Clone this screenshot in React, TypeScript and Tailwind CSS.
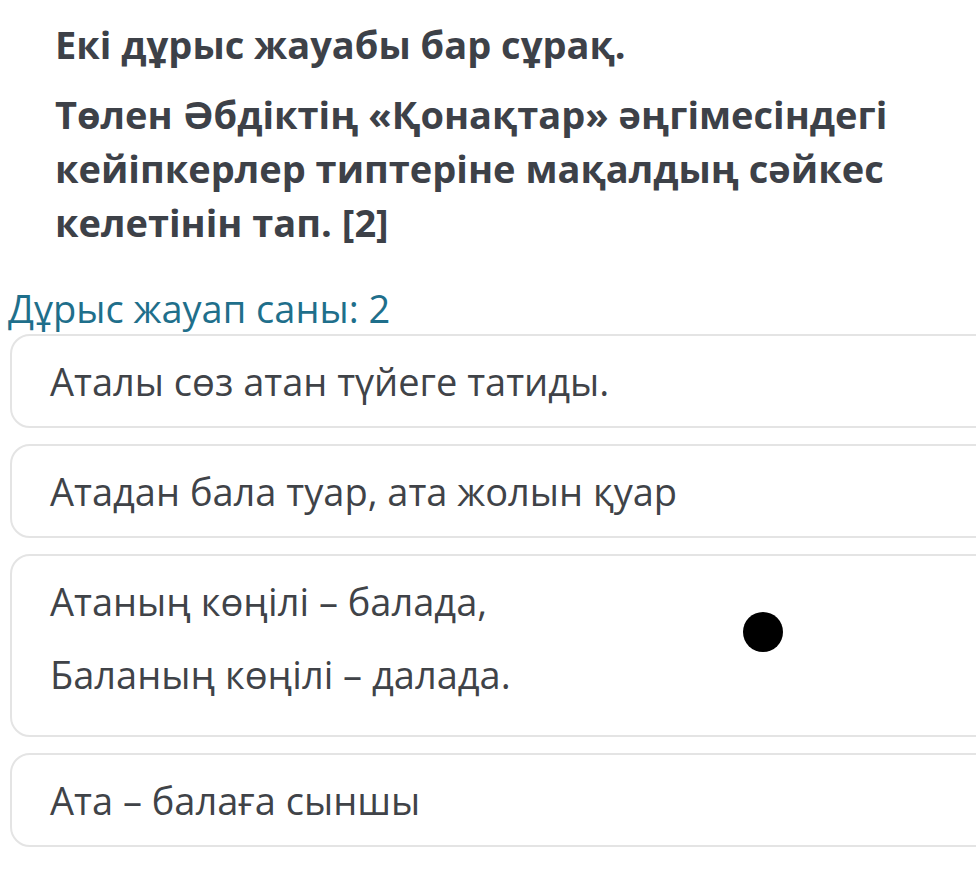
import React from 'react';

const options: string[][] = [
  ['Аталы сөз атан түйеге татиды.'],
  ['Атадан бала туар, ата жолын қуар'],
  ['Атаның көңілі – балада,', 'Баланың көңілі – далада.'],
  ['Ата – балаға сыншы'],
];

export default function App() {
  return (
    <div className="relative w-[976px] h-[894px] overflow-hidden bg-white" style={{ fontFamily: '"Open Sans", sans-serif' }}>
      <div className="pl-[55px] pt-[17px] pr-6 text-[#3d4148] font-bold text-[38px] leading-[54px]">
        <p>Екі дұрыс жауабы бар сұрақ.</p>
        <p className="mt-4">
          Төлен Әбдіктің «Қонақтар» әңгімесіндегі кейіпкерлер типтеріне мақалдың сәйкес келетінін тап. [2]
        </p>
      </div>

      <div className="mt-[36px] pl-[8px] text-[#1f6f8b] text-[38px] leading-[46px]">Дұрыс жауап саны: 2</div>

      <div className="flex flex-col gap-[16px] pl-[10px] -mr-[30px] mt-[3px]">
        {options.map((lines, i) => (
          <div
            key={i}
            className={`border-2 border-[#e4e4e4] rounded-[20px] pl-[38px] pt-[21px] ${lines.length > 1 ? 'pb-[37px]' : 'pb-[21px]'} text-[#404348] text-[38px] leading-[48px] flex flex-col gap-[25px]`}
          >
            {lines.map((l, j) => (
              <p key={j}>{l}</p>
            ))}
          </div>
        ))}
      </div>

      <div className="absolute left-[743px] top-[612px] w-[40px] h-[40px] rounded-full bg-black" />
    </div>
  );
}
